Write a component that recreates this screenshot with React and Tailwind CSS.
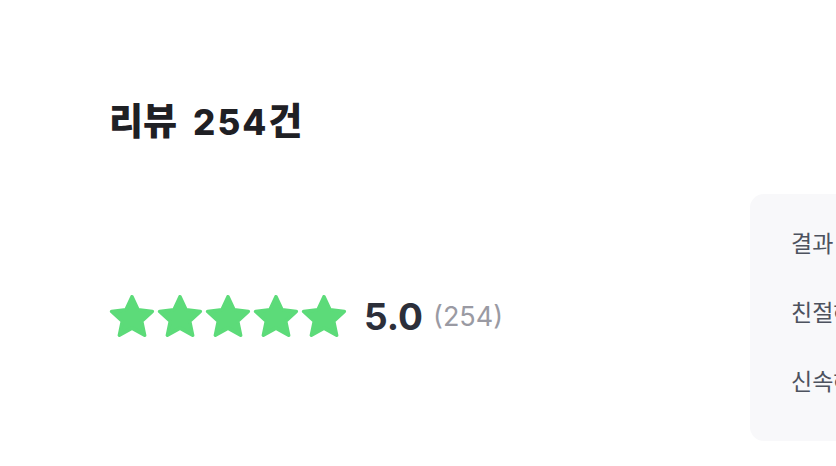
import React from "react";

const Star = () => (
  <svg width="46" height="42" viewBox="1.95 1.8 20.1 19.1" className="shrink-0">
    <path
      d="M12 2.6l2.75 5.95 6.5.72-4.85 4.42 1.35 6.41L12 16.86 6.25 20.1l1.35-6.41L2.75 9.27l6.5-.72z"
      fill="#5cdb79"
      stroke="#5cdb79"
      strokeWidth="1.6"
      strokeLinejoin="round"
    />
  </svg>
);

export default function App() {
  const font = { fontFamily: '"Inter", "Noto Sans CJK KR", "Noto Sans", sans-serif' };
  return (
    <div className="w-[836px] h-[466px] overflow-hidden bg-white relative" style={font}>
      <div className="flex">
        <div className="pl-[109px] pt-[97px] w-[750px] shrink-0">
          <h2 className="flex items-baseline text-[37px] font-extrabold text-[#1f2024] leading-[50px] whitespace-nowrap">
            <span>리뷰</span>
            <span className="ml-[16px] text-[35px] tracking-[2px]">254</span>
            <span>건</span>
          </h2>
          <div className="mt-[148px] flex items-center">
            <div className="flex gap-[2px]">
              <Star />
              <Star />
              <Star />
              <Star />
              <Star />
            </div>
            <span className="ml-[17px] text-[37px] font-bold text-[#2c2f3a] leading-none">5.0</span>
            <span className="ml-[10px] text-[27px] text-[#9a9aa3] leading-none">(254)</span>
          </div>
        </div>
        <div className="mt-[194px] w-[320px] h-[247px] shrink-0 rounded-[14px] bg-[#f8f8fa] pl-[41px] pt-[34px] flex flex-col gap-[37px]">
          <span className="text-[23px] leading-[32px] text-[#4d525e] whitespace-nowrap">결과 만족도</span>
          <span className="text-[23px] leading-[32px] text-[#4d525e] whitespace-nowrap">친절해요</span>
          <span className="text-[23px] leading-[32px] text-[#4d525e] whitespace-nowrap">신속해요</span>
        </div>
      </div>
    </div>
  );
}
